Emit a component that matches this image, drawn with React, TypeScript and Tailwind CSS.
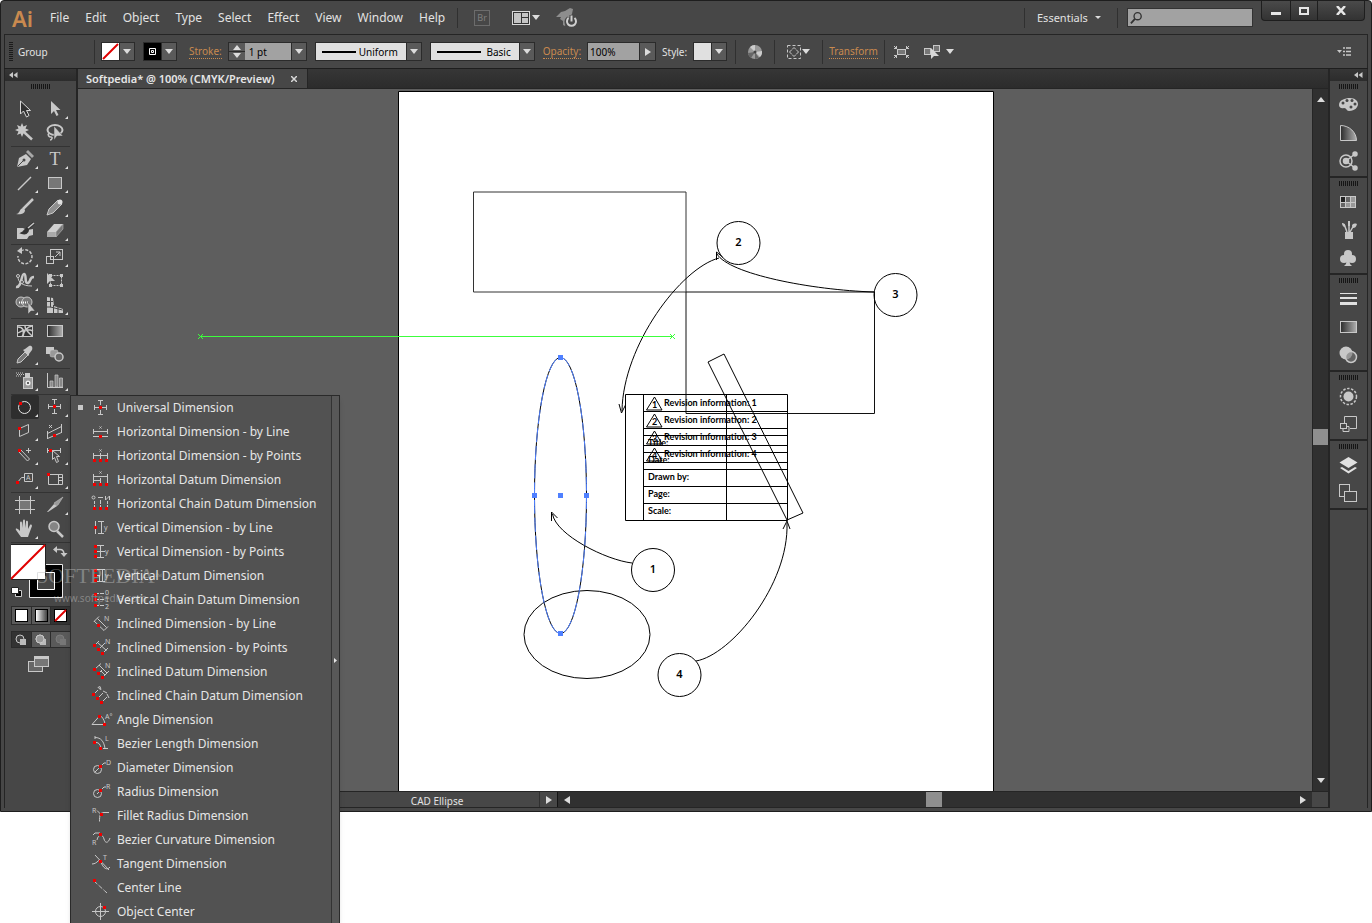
import { useState } from "react";
import type { ReactNode } from "react";

interface Tool {
  name: string;
  art: ReactNode;
  more?: boolean;
}

const L = "#c8c8c8";
const RED = "#f00000";

const MENUS = [
  "File",
  "Edit",
  "Object",
  "Type",
  "Select",
  "Effect",
  "View",
  "Window",
  "Help",
];

function Dot({ x, y }: { x: number; y: number }) {
  return <rect x={x - 1.5} y={y - 1.5} width="3" height="3" fill={RED} />;
}

function Mark({ x, y, children }: { x: number; y: number; children: string }) {
  return (
    <text x={x} y={y} fontSize="7" fill={L} stroke="none">
      {children}
    </text>
  );
}

function Line({ d, dash }: { d: string; dash?: string }) {
  return <path d={d} fill="none" stroke={L} strokeDasharray={dash} />;
}

const UNIVERSAL = (
  <>
    <Line d="M8 4.5h5M10.5 4v5M10.5 14v5M8 18.5h5M4.5 9v5M16.5 9v5M4 11.5h13" />
    <Dot x={10.5} y={11.5} />
  </>
);

// tool panel groups, two tools to a row
const TOOL_GROUPS: Tool[][] = [
  [
    {
      name: "Selection Tool",
      art: <path d="M9.5 4v13l3-3 3 6 2.5-1.5-2.5-5h4z" fill="#303030" stroke="#d8d8d8" />,
    },
    {
      name: "Direct Selection Tool",
      more: true,
      art: <path d="M10 4v13l3-3 2.5 5 2-1-2.5-5h4.5z" fill={L} />,
    },
    {
      name: "Magic Wand Tool",
      art: (
        <g>
          <path d="M14 12l7 6.5" stroke={L} strokeWidth="2.5" />
          <path
            d="M11 2l1.5 3.5L16 4l-1.5 3.5L18 9l-3.5 1.5L16 14l-3.5-1.5L11 16l-1.5-3.5L6 14l1.5-3.5L4 9l3.5-1.5L6 4l3.5 1.5z"
            fill={L}
          />
        </g>
      ),
    },
    {
      name: "Lasso Tool",
      art: (
        <g>
          <ellipse cx="14" cy="9" rx="7.5" ry="5" fill="none" stroke={L} strokeWidth="2" />
          <path d="M8 12c-2 2 0 4 2 4s1 3-1 3" fill="none" stroke={L} strokeWidth="1.5" />
          <path d="M13 5v14l3-4h6z" fill={L} stroke="#474747" strokeWidth=".5" />
        </g>
      ),
    },
  ],
  [
    {
      name: "Pen Tool",
      more: true,
      art: (
        <g>
          <path d="M6 20l2-9 7-4 5 5-4 6z" fill={L} />
          <path d="M15 5l2-2 6 6-2 2z" fill="#a8a8a8" />
          <path d="M6.5 19.5l6-6" stroke="#474747" />
          <circle cx="13" cy="13" r="1.5" fill="#474747" />
        </g>
      ),
    },
    {
      name: "Type Tool",
      more: true,
      art: (
        <text x="14" y="18" fontSize="18" textAnchor="middle" fill={L} className="font-['Liberation_Serif',serif]">
          T
        </text>
      ),
    },
    {
      name: "Line Segment Tool",
      more: true,
      art: <path d="M7 19L20 6" stroke={L} strokeWidth="1.5" />,
    },
    {
      name: "Rectangle Tool",
      more: true,
      art: <rect x="7.5" y="6.5" width="13" height="11" fill="#777" stroke={L} />,
    },
    {
      name: "Paintbrush Tool",
      art: (
        <g>
          <path d="M12 14L22 4" stroke={L} strokeWidth="2.5" />
          <path d="M5 19c4 0 3-5 7-6l2 2c0 4-5 5-9 4z" fill={L} />
        </g>
      ),
    },
    {
      name: "Pencil Tool",
      more: true,
      art: (
        <g>
          <path d="M6 20l2-6 9-9 4 4-9 9z" fill="#8f8f8f" stroke={L} />
          <circle cx="19" cy="7" r="2.5" fill="#e0e0e0" />
        </g>
      ),
    },
    {
      name: "Blob Brush Tool",
      art: (
        <g>
          <path d="M6 9h6l4 2 6-1v6l-4 1-2 3H6z" fill={L} />
          <path d="M11 14c2-1 2-3 5-4l1 1c0 3-3 4-6 3z" fill="#333" stroke="#333" strokeWidth="2" />
          <path d="M16 10l7-6" stroke="#333" strokeWidth="3" />
          <path d="M17 9l6-5" stroke={L} strokeWidth="1.5" />
        </g>
      ),
    },
    {
      name: "Eraser Tool",
      more: true,
      art: (
        <g>
          <path d="M6 13l7-8h9l-7 8z" fill="#d0d0d0" />
          <path d="M6 13h9v5H6z" fill="#aaa" />
          <path d="M15 13l7-8v5l-7 8z" fill="#777" stroke={L} strokeWidth=".5" />
        </g>
      ),
    },
  ],
  [
    {
      name: "Rotate Tool",
      more: true,
      art: (
        <g>
          <path d="M10 6a7 7 0 1 1-3 5" fill="none" stroke={L} strokeWidth="1.5" strokeDasharray="3 1.5" />
          <path d="M11 2v7L6 6z" fill={L} />
        </g>
      ),
    },
    {
      name: "Scale Tool",
      more: true,
      art: (
        <g fill="none" stroke={L}>
          <rect x="9.500" y="4.500" width="12" height="10" />
          <rect x="5.500" y="11.500" width="7" height="7" />
          <path d="M14 12l5-5M15 7h4v4" />
        </g>
      ),
    },
    {
      name: "Width Tool",
      more: true,
      art: (
        <g fill="none" stroke={L}>
          <path d="M5 18c6 1 5-13 8-13s0 10 4 9c3-1 1-6 6-6" strokeWidth="2.5" />
          <path d="M7 8c0 5 4 9 14 9" />
          <circle cx="11" cy="13" r="1.5" fill="#474747" />
          <circle cx="7" cy="7" r="1.5" fill="#474747" />
        </g>
      ),
    },
    {
      name: "Free Transform Tool",
      art: (
        <g>
          <rect x="9.5" y="6.5" width="11" height="10" fill="none" stroke={L} strokeDasharray="2 1" />
          <path d="M8 5h3v3H8zM19 5h3v3h-3zM19 15h3v3h-3zM8 15h3v3H8z" fill={L} />
          <path d="M6 4v11l3-3h5z" fill={L} />
        </g>
      ),
    },
    {
      name: "Shape Builder Tool",
      more: true,
      art: (
        <g fill="none" stroke={L}>
          <circle cx="10" cy="9" r="5" fill="#777" />
          <circle cx="16" cy="9" r="5" fill="#777" />
          <path d="M8 9.5h10" stroke="#fff" strokeDasharray="1 1" strokeWidth="2" />
          <path d="M17 9v12l3-3h4z" fill={L} stroke="#474747" strokeWidth=".5" />
        </g>
      ),
    },
    {
      name: "Perspective Grid Tool",
      more: true,
      art: (
        <g>
          <path d="M6 4l6 1 1 8 9 3v4H6z" fill={L} />
          <path d="M9.5 4v10l12 3M6 8.5h6M6 14h4M12.5 12v8M17 14v6" fill="none" stroke="#474747" />
        </g>
      ),
    },
  ],
  [
    {
      name: "Mesh Tool",
      art: (
        <g fill="none" stroke={L}>
          <rect x="6.5" y="6.5" width="15" height="11" fill="#333" />
          <path
            d="M7 8c5 0 7 4 4 10M7 14c6-4 11-4 15-2M14 7c0 4 3 6 7 10M21 7c-5 1-8 5-9 10"
            strokeWidth="1.5"
          />
        </g>
      ),
    },
    {
      name: "Gradient Tool",
      art: <rect x="6.5" y="6.5" width="15" height="11" fill="url(#tool-gradient)" stroke={L} />,
    },
    {
      name: "Eyedropper Tool",
      more: true,
      art: (
        <g>
          <path d="M6 20l1-4 7-7 3 3-7 7z" fill="#777" stroke={L} />
          <path d="M12 7l2-1 4-3c3-1 4 2 3 4l-3 4v2z" fill={L} />
        </g>
      ),
    },
    {
      name: "Blend Tool",
      art: (
        <g>
          <rect x="5" y="4" width="8" height="7" fill={L} />
          <rect x="9" y="7" width="8" height="7" rx="2" fill="#999" stroke="#ccc" strokeWidth=".5" />
          <circle cx="18" cy="14" r="4" fill="#666" stroke={L} strokeWidth="1.5" />
        </g>
      ),
    },
  ],
  [
    {
      name: "Symbol Sprayer Tool",
      more: true,
      art: (
        <g>
          <path d="M5 4h8M5 7h6M6 5.5h8" stroke={L} strokeDasharray="1 1" />
          <rect x="12.5" y="8.5" width="9" height="11" fill="#999" stroke={L} />
          <rect x="14" y="4" width="5" height="4" fill={L} />
          <circle cx="17" cy="14" r="2.5" fill="#eee" />
          <circle cx="17" cy="14" r="1" fill="#333" />
        </g>
      ),
    },
    {
      name: "Column Graph Tool",
      more: true,
      art: (
        <g>
          <path d="M6.5 4v14.5H22" fill="none" stroke={L} />
          <path d="M9 12h3v6H9zM14 6h3v12h-3zM18.5 9h3v9h-3z" fill="#888" stroke={L} strokeWidth=".7" />
        </g>
      ),
    },
  ],
  [
    {
      name: "CAD Ellipse Tool",
      more: true,
      art: (
        <g>
          <circle cx="13.5" cy="12.5" r="6" fill="none" stroke="#e6e6e6" />
          <Dot x={9.5} y={8.5} />
        </g>
      ),
    },
    {
      name: "Universal Dimension Tool",
      more: true,
      art: <g transform="translate(3 0)">{UNIVERSAL}</g>,
    },
    {
      name: "CAD Quadrilateral Tool",
      more: true,
      art: (
        <g>
          <Line d="M8.5 9.5l9-4v8l-9 4z" />
          <Dot x={8.5} y={9.5} />
        </g>
      ),
    },
    {
      name: "Object Measure Tool",
      more: true,
      art: (
        <g>
          <Line d="M6.5 14.5l14-7M6.5 19.5l14-6M6.5 12v8M20.5 5v9M8 6l3 3M11 6l-3 3" />
          <Dot x={13.5} y={16.5} />
        </g>
      ),
    },
    {
      name: "CAD Line Tool",
      more: true,
      art: (
        <g>
          <Line d="M7.5 8.5l9 9.5M9.5 6.5l9 9.5M16.500 18l2-2M17.5 5v5M15 7.5h5" />
          <Dot x={8.5} y={7.5} />
        </g>
      ),
    },
    {
      name: "Scale Dimension Tool",
      more: true,
      art: (
        <g>
          <Line d="M6.5 5v5M19.5 5v5M6 7.5h14" />
          <Dot x={9.5} y={7.5} />
          <path d="M11.5 7.5v9l2-2 2 5 2-1-2-5h3z" fill="#474747" stroke={L} />
        </g>
      ),
    },
    {
      name: "Label Tool",
      more: true,
      art: (
        <g>
          <Line d="M13.5 6.5h8v8h-8zM6.500 15.5l4-5h3" />
          <Dot x={6.5} y={15.5} />
          <Mark x={15} y={13}>A</Mark>
        </g>
      ),
    },
    {
      name: "Title Block Tool",
      more: true,
      art: (
        <g>
          <Line d="M7.5 7.5h14v10h-14zM17.5 7v10M18 10.5h3M18 13.5h3" />
          <Dot x={7.5} y={7.5} />
        </g>
      ),
    },
  ],
  [
    {
      name: "Artboard Tool",
      art: (
        <g>
          <rect x="8.5" y="7.5" width="11" height="9" fill="#777" />
          <path d="M8.5 3v18M19.5 3v18M4 7.5h20M4 16.5h20" stroke={L} />
        </g>
      ),
    },
    {
      name: "Slice Tool",
      more: true,
      art: (
        <g>
          <path d="M6 19l7-8 3 2-9 6z" fill={L} />
          <path d="M13 10l9-6-5 8-2 1z" fill="#9a9a9a" stroke={L} strokeWidth=".5" />
        </g>
      ),
    },
    {
      name: "Hand Tool",
      more: true,
      art: (
        <path
          d="M10 20l-5-7c-1-2 1-2 3 0l1 1V6c0-2 2-2 2 0v5l1-7c0-2 2-2 2 0v7l1-6c0-2 2-1 2 0v7l2-4c1-1 2 0 2 1l-3 8-1 3z"
          fill={L}
        />
      ),
    },
    {
      name: "Zoom Tool",
      art: (
        <g>
          <path d="M16 14l6 6" stroke={L} strokeWidth="2.5" />
          <circle cx="13" cy="9.5" r="5" fill="#858585" stroke={L} strokeWidth="1.5" />
        </g>
      ),
    },
  ],
];

const DIMENSIONS: Tool[] = [
  { name: "Universal Dimension", art: UNIVERSAL },
  {
    name: "Horizontal Dimension - by Line",
    art: (
      <>
        <Line d="M3.5 9v5M17.5 9v5M3 11.5h15M3 16.5h15M9.5 6.5l2 2M11.5 6.5l-2 2" />
        <Dot x={10.5} y={16.5} />
      </>
    ),
  },
  {
    name: "Horizontal Dimension - by Points",
    art: (
      <>
        <Line d="M3.5 9v6M10.5 9v6M17.5 9v6M3 11.5h15M9.5 5.5l2 2M11.5 5.5l-2 2" />
        <Dot x={4.5} y={16.5} />
        <Dot x={10.5} y={16.5} />
        <Dot x={16.5} y={16.5} />
      </>
    ),
  },
  {
    name: "Horizontal Datum Dimension",
    art: (
      <>
        <Line d="M3.5 6v9M10.5 10v5M17.5 6v9M3 8.5h15M3 12.5h8M9.5 3.5l2 2M11.5 3.5l-2 2" />
        <Dot x={4.5} y={16.5} />
        <Dot x={10.5} y={16.5} />
        <Dot x={16.5} y={16.5} />
      </>
    ),
  },
  {
    name: "Horizontal Chain Datum Dimension",
    art: (
      <>
        <Line d="M4.5 9v3M4.5 13v2M10.5 8v4M10.5 13v2M17.5 9v3M17.5 13v2M8 5.5h5M15.5 4v4l4-4v4" />
        <circle cx="3.5" cy="5.5" r="1.5" fill="none" stroke={L} />
        <Dot x={4.5} y={16.5} />
        <Dot x={10.5} y={16.5} />
        <Dot x={16.5} y={16.5} />
      </>
    ),
  },
  {
    name: "Vertical Dimension - by Line",
    art: (
      <>
        <Line d="M5.5 5v13M8 5.5h6M8 17.5h6M11.5 5v13" />
        <Dot x={5.5} y={11.5} />
        <Mark x={14} y={14}>y</Mark>
      </>
    ),
  },
  {
    name: "Vertical Dimension - by Points",
    art: (
      <>
        <Line d="M7 5.5h7M7 11.5h8M7 17.5h7M10.5 5v13" />
        <Dot x={5.5} y={6.5} />
        <Dot x={5.5} y={11.5} />
        <Dot x={5.5} y={16.5} />
        <Mark x={15} y={14}>y</Mark>
      </>
    ),
  },
  {
    name: "Vertical Datum Dimension",
    art: (
      <>
        <Line d="M7 5.5h8M7 11.5h3M7 17.5h8M9.5 11v7M12.5 5v13" />
        <Dot x={5.5} y={6.5} />
        <Dot x={5.5} y={11.5} />
        <Dot x={5.5} y={16.5} />
        <Mark x={15} y={14}>y</Mark>
      </>
    ),
  },
  {
    name: "Vertical Chain Datum Dimension",
    art: (
      <>
        <Line d="M7 5.5h2M10 5.5h4M7 11.5h2M10 11.5h4M7 17.5h2M10 17.5h4" />
        <Dot x={5.5} y={6.5} />
        <Dot x={5.5} y={11.5} />
        <Dot x={5.5} y={17.5} />
        <Mark x={15} y={7}>0</Mark>
        <Mark x={15} y={14}>1</Mark>
        <Mark x={15} y={21}>2</Mark>
      </>
    ),
  },
  {
    name: "Inclined Dimension - by Line",
    art: (
      <>
        <Line d="M4 9.5l5-5M14 18.5l4-4M7.5 6.5l9 9M4 9l10 9.5" />
        <Dot x={8.5} y={13.5} />
        <Mark x={14} y={9}>N</Mark>
      </>
    ),
  },
  {
    name: "Inclined Dimension - by Points",
    art: (
      <>
        <Line d="M5 9l4-4M9 13l6-6M13 17l5-5M7.5 6.5l9 8" />
        <Dot x={4.5} y={9.5} />
        <Dot x={8.5} y={13.5} />
        <Dot x={12.5} y={17.5} />
        <Mark x={15} y={8}>N</Mark>
      </>
    ),
  },
  {
    name: "Inclined Datum Dimension",
    art: (
      <>
        <Line d="M5 9l6-5.500M9 13l3-3M13 17l6-6M9 5l8 8M11 11l4 4" />
        <Dot x={4.5} y={9.5} />
        <Dot x={8.5} y={13.5} />
        <Dot x={12.5} y={17.5} />
        <Mark x={15} y={8}>N</Mark>
      </>
    ),
  },
  {
    name: "Inclined Chain Datum Dimension",
    art: (
      <>
        <Line d="M4 10l4-4M8 14l5-5M12 18l5-5M8 3.5l2-1 1 3-2-1zM13 7l4 2M17 10l2 4" />
        <Dot x={3.5} y={10.5} />
        <Dot x={7.5} y={14.5} />
        <Dot x={11.5} y={18.5} />
      </>
    ),
  },
  {
    name: "Angle Dimension",
    art: (
      <>
        <Line d="M15 16.5H2l8-9c2 1 4 4 5 8" />
        <Dot x={9.5} y={8.5} />
        <Dot x={14.5} y={16.5} />
        <Mark x={15} y={11}>A°</Mark>
      </>
    ),
  },
  {
    name: "Bezier Length Dimension",
    art: (
      <>
        <Line d="M5 5.5c6 0 9 4 10 11M5 4v3M13 16.5h5M6 10.5c3 0 4 2 5 5" />
        <Dot x={4.5} y={10.5} />
        <Dot x={10.5} y={16.5} />
        <Mark x={15} y={9}>L</Mark>
      </>
    ),
  },
  {
    name: "Diameter Dimension",
    art: (
      <>
        <circle cx="7.5" cy="13.5" r="4" fill="none" stroke={L} />
        <Line d="M5 16l9-9h2" />
        <Dot x={10.5} y={10.5} />
        <Mark x={16} y={9}>D</Mark>
      </>
    ),
  },
  {
    name: "Radius Dimension",
    art: (
      <>
        <circle cx="7.5" cy="13.5" r="4" fill="none" stroke={L} />
        <Line d="M7 14l7-7h2" />
        <Dot x={10.5} y={10.5} />
        <Mark x={16} y={9}>R</Mark>
      </>
    ),
  },
  {
    name: "Fillet Radius Dimension",
    art: (
      <>
        <Line d="M19 8.5h-5c-4 0-4.500 3-4.500 9M7 6.5l4 4" />
        <Dot x={11.5} y={10.5} />
        <Mark x={2} y={9}>R</Mark>
      </>
    ),
  },
  {
    name: "Bezier Curvature Dimension",
    art: (
      <>
        <Line d="M3 7l2-2h5M7 12c1-6 6-6 7-1 1 4 4 5 6-1" />
        <Dot x={10.5} y={6.5} />
        <Mark x={2} y={17}>R</Mark>
      </>
    ),
  },
  {
    name: "Tangent Dimension",
    art: (
      <>
        <Line d="M2 12c6 0 7-7 9-2 2 6 6 9 9 5M5 3l14 15" />
        <Dot x={10.5} y={9.5} />
        <Mark x={13} y={8}>T</Mark>
      </>
    ),
  },
  {
    name: "Center Line",
    art: (
      <>
        <Line d="M4 5l13 12" dash="4 1 1 1" />
        <Dot x={4.5} y={4.5} />
      </>
    ),
  },
  {
    name: "Object Center",
    art: (
      <>
        <circle cx="10.5" cy="11.5" r="5" fill="none" stroke={L} />
        <Line d="M10.5 3v17M2 11.5h17" />
        <Dot x={14.5} y={7.5} />
      </>
    ),
  },
];

const DOCK_GROUPS: Tool[][] = [
  [
    {
      name: "Color",
      art: (
        <g>
          <path d="M1 10c0-5 6-7 11-7 5 0 8 3 8 6s-3 7-9 7c-3 0-2-3-5-3-3 1-5-1-5-3z" fill={L} />
          <circle cx="5" cy="8" r="1.5" fill="#474747" />
          <circle cx="9" cy="5.5" r="1.5" fill="#474747" />
          <circle cx="14" cy="5.5" r="1.5" fill="#474747" />
          <circle cx="17" cy="9" r="1.5" fill="#474747" />
          <circle cx="13" cy="12" r="1.5" fill="#474747" />
        </g>
      ),
    },
    {
      name: "Color Guide",
      art: <path d="M2.5 2.5v15h16c0-8-7-15-16-15z" fill="url(#tool-gradient)" stroke={L} />,
    },
    {
      name: "Kuler",
      art: (
        <g fill="none" stroke={L} strokeWidth="1.5">
          <circle cx="8" cy="10" r="6" />
          <circle cx="8" cy="10" r="2.5" fill={L} />
          <path d="M8 10l9-7M8 10l9 7" />
          <circle cx="17" cy="3" r="2" fill={L} />
          <circle cx="17" cy="17" r="2" fill={L} />
        </g>
      ),
    },
  ],
  [
    {
      name: "Swatches",
      art: (
        <g>
          <rect x="2" y="4" width="16" height="12" fill={L} />
          <path d="M3 5h4v5H3z" fill="#222" />
          <path d="M8 5h4v5H8zM3 11h4v4H3z" fill="#666" />
          <path d="M13 5h4v5h-4zM8 11h4v4H8zM13 11h4v4h-4z" fill="#999" />
        </g>
      ),
    },
    {
      name: "Brushes",
      art: (
        <g>
          <path d="M7 12h8v7H7z" fill={L} />
          <path d="M9 12L6 4M11 12V3M12 12l4-7" stroke={L} strokeWidth="1.5" />
          <path d="M4 3c2 0 4 2 3 4-2 0-3-2-3-4zM10 1h2v5h-2zM14 6c0-2 2-3 5-2-1 3-2 4-4 4z" fill={L} />
        </g>
      ),
    },
    {
      name: "Symbols",
      art: (
        <g fill={L}>
          <circle cx="10" cy="6" r="4" />
          <circle cx="6" cy="11" r="4" />
          <circle cx="14" cy="11" r="4" />
          <path d="M9 9h2l1 7 2 2H6l2-2z" />
        </g>
      ),
    },
  ],
  [
    {
      name: "Stroke",
      art: (
        <g stroke="#e0e0e0">
          <path d="M2 4.5h17" />
          <path d="M2 9h17" strokeWidth="2" />
          <path d="M2 14.5h17" strokeWidth="3" />
        </g>
      ),
    },
    {
      name: "Gradient",
      art: <rect x="2.5" y="4.5" width="16" height="11" fill="url(#tool-gradient)" stroke={L} />,
    },
    {
      name: "Transparency",
      art: (
        <g>
          <circle cx="8" cy="8" r="6.5" fill={L} />
          <circle cx="13" cy="12" r="5.5" fill="#777" fillOpacity=".6" stroke={L} strokeWidth="1.5" />
        </g>
      ),
    },
  ],
  [
    {
      name: "Appearance",
      art: (
        <g>
          <circle cx="10.5" cy="10.5" r="5" fill={L} />
          <circle
            cx="10.5"
            cy="10.5"
            r="8"
            fill="none"
            stroke={L}
            strokeWidth="1.5"
            strokeDasharray="2.5 1.5"
          />
        </g>
      ),
    },
    {
      name: "Graphic Styles",
      art: (
        <g fill="none" stroke={L}>
          <path d="M6.5 9V2.5h12v12H12" />
          <rect x="2.5" y="9.5" width="6" height="5" />
          <path d="M9 12.5h2v5H5v-3" />
        </g>
      ),
    },
  ],
  [
    {
      name: "Layers",
      art: (
        <g fill="#e0e0e0">
          <path d="M10.5 2l9 5.5-9 5.500-9-5.500z" />
          <path d="M4 12l6.500 4 6.500-4 2 1-8.500 5.500L2 13z" />
        </g>
      ),
    },
    {
      name: "Artboards",
      art: (
        <g fill="#474747" stroke={L}>
          <rect x="1.5" y="1.5" width="10" height="12" />
          <rect x="6.5" y="8.5" width="12" height="10" />
        </g>
      ),
    },
  ],
];

function Arrow({ className = "" }: { className?: string }) {
  return (
    <svg width="8" height="6" viewBox="0 0 8 6" className={className} aria-hidden="true">
      <path d="M0 0h8L4 5z" fill="#dcdcdc" />
    </svg>
  );
}

function SideArrow({ left = false }: { left?: boolean }) {
  return (
    <svg width="6" height="8" viewBox="0 0 6 8" aria-hidden="true">
      <path d={left ? "M6 0v8L0 4z" : "M0 0v8l6-4z"} fill="#dcdcdc" />
    </svg>
  );
}

function DropButton({ label }: { label: string }) {
  return (
    <button
      aria-label={label}
      className="flex h-full w-[15px] shrink-0 items-center justify-center border-l border-[#2b2b2b] bg-[#5a5a5a]"
    >
      <Arrow />
    </button>
  );
}

function Divider() {
  return <span className="h-6 w-px shrink-0 bg-[#303030]" />;
}

function Grip() {
  return (
    <div className="flex h-[10px] items-center justify-center">
      <svg width="19" height="5" viewBox="0 0 19 5" aria-hidden="true">
        <path d="M0 2.5h19" stroke="#151515" strokeWidth="5" strokeDasharray="1 1" />
      </svg>
    </div>
  );
}

function Collapse() {
  return (
    <svg width="9" height="6" viewBox="0 0 9 6" aria-hidden="true">
      <path d="M4 0v6L0 3zM8.5 0v6l-4-3z" fill="#c8c8c8" />
    </svg>
  );
}

function StrokeSelect({
  label,
  value,
  line,
  className,
}: {
  label: string;
  value: string;
  line: number;
  className: string;
}) {
  return (
    <div className="ml-2 flex h-[19px] items-center border border-[#2b2b2b] bg-[#e0e0e0]">
      <svg width={line} height="2" className="ml-[6px] shrink-0" aria-hidden="true">
        <path d={`M0 1h${line}`} stroke="#000" strokeWidth="2" />
      </svg>
      <select
        aria-label={label}
        defaultValue={value}
        className={`appearance-none pr-2 text-right text-[10px] leading-4 text-black outline-none ${className}`}
      >
        <option>{value}</option>
      </select>
      <DropButton label={`${label} list`} />
    </div>
  );
}

function TitleBar() {
  return (
    <header className="flex h-[33px] items-center">
      <span className="w-8 pl-2 text-[22px] leading-6 font-semibold text-[#c98a4f]">Ai</span>
      <nav className="ml-[6px] flex">
        {MENUS.map((menu) => (
          <button key={menu} className="px-2 text-[12px] leading-5 text-[#e2e2e2]">
            {menu}
          </button>
        ))}
      </nav>
      <span className="mr-4 ml-1 h-5 w-px bg-[#303030]" />
      <button className="h-4 w-4 border border-[#6c6c6c] text-[9px] leading-3 text-[#808080]">Br</button>
      <button aria-label="Arrange documents" className="ml-[22px] flex items-center gap-[2px]">
        <svg width="18" height="16" viewBox="0 0 18 16" aria-hidden="true">
          <rect x=".5" y="1.5" width="17" height="13" fill="#333" stroke="#d8d8d8" />
          <path d="M2 3h7v10H2zM10 3h6v4h-6zM10 8h6v5h-6z" fill="#c4c4c4" />
        </svg>
        <Arrow />
      </button>
      <button aria-label="GPU performance" className="ml-4">
        <svg width="22" height="20" viewBox="0 0 22 20" aria-hidden="true">
          <path d="M0 9l5-5 4-1 5-3 3 1-1 5-3 4-4 8-2-1v-4l-3-2 1-2z" fill="#8d8d8d" />
          <path d="M12.500 10a5 5 0 1 0 6 0M15.500 7v7" fill="none" stroke="#474747" strokeWidth="4" />
          <path d="M12.500 10a4.500 4.500 0 1 0 6 0M15.500 7.500v6" fill="none" stroke="#d0d0d0" strokeWidth="2" />
        </svg>
      </button>
      <div className="ml-auto flex h-full items-center">
        <span className="h-5 w-px bg-[#303030]" />
        <div className="relative ml-2 flex items-center">
          <select
            aria-label="Workspace"
            defaultValue="Essentials"
            className="w-[76px] appearance-none px-1 text-[11px] leading-5 text-[#e2e2e2] outline-none"
          >
            <option>Essentials</option>
          </select>
          <svg
            width="6"
            height="4"
            viewBox="0 0 6 4"
            className="pointer-events-none absolute right-2"
            aria-hidden="true"
          >
            <path d="M0 0h6L3 3z" fill="#dcdcdc" />
          </svg>
        </div>
        <span className="mr-[9px] ml-2 h-5 w-px bg-[#303030]" />
        <label className="flex h-[19px] w-[126px] items-center border border-[#333] bg-[#a2a2a2] pl-[2px]">
          <svg width="14" height="14" viewBox="0 0 14 14" aria-hidden="true">
            <circle cx="8.5" cy="5" r="4" fill="none" stroke="#333" strokeWidth="1.5" />
            <path d="M5.5 8L1 13" stroke="#333" strokeWidth="2" />
          </svg>
          <input
            type="search"
            aria-label="Search"
            className="w-full bg-transparent text-[12px] leading-4 outline-none"
          />
        </label>
        <div className="mr-[3px] ml-2 flex h-5 self-start overflow-hidden rounded-b border border-t-0 border-[#1e1e1e] bg-linear-to-b from-[#4a4a4a] to-[#333]">
          <button aria-label="Minimize" className="flex w-7 items-end justify-center pb-[5px]">
            <span className="h-[3px] w-[10px] bg-[#e6e6e6]" />
          </button>
          <button aria-label="Maximize" className="flex w-7 items-center justify-center border-x border-[#1e1e1e]">
            <span className="h-2 w-[10px] border-2 border-[#e6e6e6]" />
          </button>
          <button aria-label="Close" className="flex w-[46px] items-center justify-center">
            <svg width="10" height="9" viewBox="0 0 10 9" aria-hidden="true">
              <path d="M1 0l8 9M9 0L1 9" stroke="#e6e6e6" strokeWidth="2.5" />
            </svg>
          </button>
        </div>
      </div>
    </header>
  );
}

function ControlBar() {
  return (
    <div className="flex h-[34px] items-center border border-b-0 border-[#252525] pl-1 text-[10px] leading-4 text-[#e2e2e2]">
      <svg width="4" height="19" viewBox="0 0 4 19" aria-hidden="true">
        <path d="M2 0v19" stroke="#1c1c1c" strokeWidth="4" strokeDasharray="1 1" />
      </svg>
      <span className="ml-[5px] w-[76px]">Group</span>
      <Divider />
      <div className="ml-[6px] flex h-[19px] border border-[#2b2b2b]">
        <button aria-label="Fill" className="w-[17px] bg-white">
          <svg width="17" height="17" viewBox="0 0 17 17" aria-hidden="true">
            <path d="M1 16L16 1" stroke="#e00000" strokeWidth="2" />
          </svg>
        </button>
        <DropButton label="Fill swatches" />
      </div>
      <div className="ml-2 flex h-[19px] border border-[#2b2b2b]">
        <button aria-label="Stroke color" className="w-[17px] bg-black">
          <svg width="17" height="17" viewBox="0 0 17 17" aria-hidden="true">
            <path d="M5.500 5.500h6v6h-6z" fill="none" stroke="#fff" />
            <path d="M7.500 7.500h2v2h-2z" fill="none" stroke="#fff" />
          </svg>
        </button>
        <DropButton label="Stroke swatches" />
      </div>
      <label
        htmlFor="stroke-weight"
        className="ml-3 border-b border-dotted border-[#c98a4f] leading-[14px] text-[#c98a4f]"
      >
        Stroke:
      </label>
      <div className="ml-[6px] flex h-[19px] border border-[#2b2b2b]">
        <div className="flex w-4 flex-col bg-[#5a5a5a]">
          <button
            aria-label="Increase stroke"
            className="flex flex-1 items-center justify-center border-b border-[#2b2b2b]"
          >
            <Arrow className="rotate-180" />
          </button>
          <button aria-label="Decrease stroke" className="flex flex-1 items-center justify-center">
            <Arrow />
          </button>
        </div>
        <input
          id="stroke-weight"
          defaultValue="1 pt"
          className="w-[46px] bg-[#a2a2a2] px-1 text-black outline-none"
        />
        <DropButton label="Stroke weights" />
      </div>
      <StrokeSelect label="Variable width profile" value="Uniform" line={34} className="w-[50px]" />
      <StrokeSelect label="Brush definition" value="Basic" line={44} className="w-[38px]" />
      <label
        htmlFor="opacity"
        className="ml-2 border-b border-dotted border-[#c98a4f] leading-[14px] text-[#c98a4f]"
      >
        Opacity:
      </label>
      <div className="ml-[6px] flex h-[19px] border border-[#2b2b2b]">
        <input
          id="opacity"
          defaultValue="100%"
          className="w-[51px] bg-[#a2a2a2] px-[2px] text-black outline-none"
        />
        <button
          aria-label="Opacity slider"
          className="flex w-4 items-center justify-center border-l border-[#2b2b2b] bg-[#5a5a5a]"
        >
          <SideArrow />
        </button>
      </div>
      <span className="ml-[6px]">Style:</span>
      <div className="ml-[6px] flex h-[19px] border border-[#2b2b2b]">
        <span className="w-[17px] bg-[#e0e0e0]" />
        <DropButton label="Graphic styles" />
      </div>
      <div className="ml-2 flex items-center gap-3">
        <Divider />
        <button aria-label="Recolor artwork">
          <svg width="14" height="14" viewBox="0 0 14 14" aria-hidden="true">
            <circle cx="7" cy="7" r="7" fill="#999" />
            <path d="M7 7L2 2a7 7 0 0 1 5-2zM7 7l7-1a7 7 0 0 1-2 6z" fill="#ccc" />
            <path d="M7 7L0 8a7 7 0 0 0 3 5zM7 7v7l4-1z" fill="#666" />
            <circle cx="7" cy="7" r="1.5" fill="#444" />
          </svg>
        </button>
        <Divider />
        <button aria-label="Align to" className="flex items-center">
          <svg width="15" height="14" viewBox="0 0 15 14" aria-hidden="true">
            <rect x=".5" y=".5" width="13" height="13" fill="none" stroke={L} strokeDasharray="3 2" />
            <path
              d="M4.500 5l-2 2 2 2M9.500 5l2 2-2 2M5 4.500l2-2 2 2M5 9.500l2 2 2-2"
              fill="none"
              stroke={L}
            />
          </svg>
          <Arrow />
        </button>
        <Divider />
        <button className="-mx-[6px] border-b border-dotted border-[#c98a4f] leading-[14px] text-[#c98a4f]">
          Transform
        </button>
        <Divider />
      </div>
      <button aria-label="Isolate selected object" className="ml-2">
        <svg width="17" height="14" viewBox="0 0 17 14" aria-hidden="true">
          <rect x="4.5" y="4.5" width="8" height="5" fill="#777" stroke={L} />
          <path
            d="M1 1l3 3M16 1l-3 3M1 13l3-3M16 13l-3-3M3.500 1v2.500H1M13.500 1v2.500H16M3.500 13v-2.500H1M13.500 13v-2.500H16"
            stroke={L}
            fill="none"
          />
        </svg>
      </button>
      <button aria-label="Select similar objects" className="ml-[14px] flex items-center gap-[6px]">
        <svg width="16" height="14" viewBox="0 0 16 14" aria-hidden="true">
          <rect x=".5" y="3.5" width="6" height="6" fill="#777" stroke={L} />
          <rect x="9.5" y=".5" width="6" height="6" fill="#777" stroke={L} />
          <path d="M7 3v11l3-3h5z" fill="#d8d8d8" />
        </svg>
        <Arrow />
      </button>
      <button aria-label="Panel menu" className="mr-4 ml-auto">
        <svg width="14" height="9" viewBox="0 0 14 9" aria-hidden="true">
          <path d="M0 3h5L2.500 6z" fill={L} />
          <path d="M6 1h2M6 4.500h2M6 8h2M9 1h5M9 4.500h5M9 8h5" stroke={L} strokeWidth="1.5" />
        </svg>
      </button>
    </div>
  );
}

function DimensionMenu() {
  const [picked, setPicked] = useState("Universal Dimension");

  return (
    <div className="absolute top-0 left-[59px] z-20 flex w-[270px] border border-[#2a2a2a] bg-[#525252] shadow-md">
      <ul className="flex-1">
        {DIMENSIONS.map((item) => (
          <li key={item.name}>
            <button
              className="flex h-6 w-full items-center pb-px text-left"
              onClick={() => setPicked(item.name)}
            >
              <span className="flex w-[18px] justify-end pr-[6px]">
                {picked === item.name && <span className="h-[5px] w-[5px] bg-[#c8c8c8]" />}
              </span>
              <svg width="24" height="24" viewBox="0 0 24 24" className="ml-px shrink-0" aria-hidden="true">
                {item.art}
              </svg>
              <span className="ml-[3px] text-[12px] leading-5 whitespace-nowrap text-[#e6e6e6]">
                {item.name}
              </span>
            </button>
          </li>
        ))}
      </ul>
      <button
        aria-label="Tear off"
        className="flex w-2 items-center justify-center border-l border-[#333] bg-[#585858]"
      >
        <svg width="3" height="5" viewBox="0 0 3 5" aria-hidden="true">
          <path d="M0 0v5l3-2.500z" fill="#e6e6e6" />
        </svg>
      </button>
    </div>
  );
}

function FillStroke() {
  return (
    <div className="relative">
      <svg width="60" height="58" viewBox="0 0 60 58" className="mt-px" aria-hidden="true">
        <path d="M18.5 20.5h33v33h-33z" fill="#000" stroke="#e8e8e8" />
        <path d="M26.5 28.5h17v17h-17z" fill="#474747" stroke="#fff" />
        <rect x="-.5" y=".5" width="35" height="35" fill="#fff" stroke="#222" />
        <path d="M0 35L34 1" stroke="#e00000" strokeWidth="2" />
        <path d="M26.5 35v-6.500h8" fill="none" stroke="#ddd" />
        <path d="M45 5.500h4c3 0 4 2 4 5" fill="none" stroke={L} strokeWidth="1.5" />
        <path d="M46 2v7l-4-3.500zM49.500 9h7L53 13z" fill={L} />
        <path d="M4.500 46.500h6v6h-6z" fill="#000" stroke="#ccc" />
        <path d="M.5 43.500h7v6h-7z" fill="#fff" stroke="#222" />
      </svg>
      <div className="mt-1 flex h-[19px] w-[60px] border border-[#2b2b2b] bg-[#5a5a5a]">
        <button aria-label="Color" className="flex flex-1 items-center justify-center">
          <span className="h-[13px] w-[13px] border border-black bg-white" />
        </button>
        <button
          aria-label="Gradient"
          className="flex flex-1 items-center justify-center border-x border-[#2b2b2b]"
        >
          <span className="h-[13px] w-[13px] border border-black bg-linear-to-r from-white to-[#444]" />
        </button>
        <button aria-label="None" className="flex flex-1 items-center justify-center bg-[#333]">
          <svg width="13" height="13" viewBox="0 0 13 13" aria-hidden="true">
            <rect x=".5" y=".5" width="12" height="12" fill="#fff" stroke="#000" />
            <path d="M1 12L12 1" stroke="#e00000" strokeWidth="2" />
          </svg>
        </button>
      </div>
      <div className="mt-[6px] flex h-[17px] w-[60px] border border-[#2b2b2b] bg-[#5a5a5a]">
        {["Draw Normal", "Draw Behind", "Draw Inside"].map((mode, i) => (
          <button
            key={mode}
            aria-label={mode}
            className={`flex flex-1 items-center justify-center ${
              i === 0 ? "bg-[#333]" : "border-l border-[#2b2b2b]"
            }`}
          >
            <svg width="12" height="11" viewBox="0 0 12 11" opacity={i === 2 ? 0.3 : 1} aria-hidden="true">
              <circle cx="5" cy="5" r="4" fill={i === 0 ? "#444" : "#999"} stroke={L} />
              <rect x="5" y="5" width="6" height="6" fill="#bbb" />
              {i === 1 && <circle cx="5" cy="5" r="4" fill="#999" stroke={L} />}
            </svg>
          </button>
        ))}
      </div>
      <button aria-label="Change screen mode" className="mt-2 ml-[17px] block">
        <svg width="22" height="17" viewBox="0 0 22 17" aria-hidden="true">
          <rect x=".5" y="5.5" width="14" height="10" fill="#666" stroke={L} />
          <rect x="6.5" y=".5" width="14" height="10" fill="#777" stroke={L} />
          <path d="M7 2h13" stroke={L} strokeWidth="2" />
        </svg>
      </button>
      <div className="pointer-events-none absolute top-5 left-[25px] z-30 whitespace-nowrap text-white/30">
        <p className="font-['Liberation_Serif',serif] text-[22px] leading-6">
          SOFTPEDIA<sup className="text-[8px]">™</sup>
        </p>
        <p className="ml-[18px] text-[10px] leading-5">www.softpedia.com</p>
      </div>
    </div>
  );
}

function ToolPanel() {
  const [active, setActive] = useState("CAD Ellipse Tool");

  return (
    <aside className="w-[74px] shrink-0 border-r-2 border-l border-[#252525]">
      <div className="flex h-3 items-center bg-linear-to-b from-[#363636] to-[#2c2c2c] pl-1">
        <Collapse />
      </div>
      <Grip />
      <div className="mt-[6px] px-[6px]">
        {TOOL_GROUPS.map((group, i) => (
          <div
            key={i}
            className="relative grid grid-cols-[28px_28px] gap-x-[2px] border-b border-[#333] pb-px"
          >
            {group.map((tool) => (
              <button
                key={tool.name}
                aria-label={tool.name}
                onClick={() => setActive(tool.name)}
                className={`h-6 w-7 ${active === tool.name ? "rounded-xs bg-[#2e2e2e]" : ""}`}
              >
                <svg width="28" height="24" viewBox="0 0 28 24" aria-hidden="true">
                  {tool.art}
                  {tool.more && <path d="M24 22h3v-3z" fill="#e0e0e0" />}
                </svg>
              </button>
            ))}
            {i === 5 && <DimensionMenu />}
          </div>
        ))}
        <FillStroke />
      </div>
    </aside>
  );
}

function RevisionTable() {
  const rows = [411.5, 428.5, 435.5, 445.5, 452.5, 462.5, 469.5, 486.5, 503.5];

  return (
    <g>
      <path d="M624.5 394.5h162v126h-162zM642.5 394v126M725.5 394v126" />
      {rows.map((y) => (
        <path key={y} d={`M642 ${y}h144`} />
      ))}
      <g fill="#000" stroke="none" fontSize="9" fontWeight="700" className="font-[Lato,'Noto_Sans',sans-serif]">
        {[1, 2, 3, 4].map((n) => (
          <g key={n} transform={`translate(0 ${(n - 1) * 17})`}>
            <path d="M653.5 397l7.500 13h-15.500z" fill="none" stroke="#000" />
            <text x="651" y="408">
              {n}
            </text>
            <text x="663" y="406">
              Revision information: {n}
            </text>
          </g>
        ))}
        <text x="647" y="446">Title:</text>
        <text x="647" y="463">Date:</text>
        <text x="647" y="480">Drawn by:</text>
        <text x="647" y="497">Page:</text>
        <text x="647" y="514">Scale:</text>
      </g>
    </g>
  );
}

function Artboard() {
  const callouts = [
    { n: 2, x: 737.5, y: 243 },
    { n: 3, x: 894.5, y: 295 },
    { n: 1, x: 652, y: 570 },
    { n: 4, x: 678.5, y: 675 },
  ];
  const handles = [
    [559.5, 357.5],
    [533.5, 495.5],
    [559.5, 495.5],
    [585.5, 495.5],
    [559.5, 633.5],
  ];

  return (
    <svg
      width="595"
      height="702"
      viewBox="397 89 595 702"
      className="shrink-0 overflow-visible"
      fill="none"
      stroke="#000"
    >
      <path d="M397.5 792V91.5h595V792" fill="#fff" />
      <path d="M472.5 192h212.5v100h-212.5z" stroke="#333" />
      <path d="M685 292h188.5v121.5H685z" stroke="#111" />
      <path d="M707 362l16-8 79 159-16 7z" />
      <path d="M718 258C680 268 622 345 621 411M618 404l2.5 9 4-8" />
      <path d="M873 292C810 290 728 274 716 254M715.5 260v-8l6 5" />
      <path d="M631 563C605 560 555 535 551.5 514M550.5 521v-9l6 6" />
      <path d="M695 661C730 655 788 585 786 523M782 529l4-8 3 8" />
      <ellipse cx="586" cy="634.5" rx="63" ry="44" />
      <ellipse cx="559.5" cy="495.5" rx="26" ry="138" />
      <ellipse cx="559.5" cy="495.5" rx="26" ry="138" stroke="#4f80ff" strokeDasharray="14 4" />
      {handles.map(([x, y]) => (
        <rect key={`${x}-${y}`} x={x - 2} y={y - 2} width="4" height="4" fill="#4f80ff" stroke="#4f80ff" />
      ))}
      <RevisionTable />
      {callouts.map((c) => (
        <g key={c.n}>
          <circle cx={c.x} cy={c.y} r="21.5" />
          <text x={c.x} y={c.y + 3} textAnchor="middle" fill="#000" stroke="none" fontSize="11" fontWeight="600">
            {c.n}
          </text>
        </g>
      ))}
      <path d="M199 336.5h473M197 334l5 5M202 334l-5 5M669 334l5 5M674 334l-5 5" stroke="#3cff3c" />
    </svg>
  );
}

function Dock() {
  return (
    <aside className="w-[38px] shrink-0 border-r border-[#252525]">
      <div className="flex h-3 items-center justify-end bg-linear-to-b from-[#363636] to-[#2c2c2c] pr-1">
        <Collapse />
      </div>
      {DOCK_GROUPS.map((group, i) => (
        <div key={i} className="border-b-2 border-[#252525] pb-px">
          <Grip />
          {group.map((panel) => (
            <button
              key={panel.name}
              aria-label={panel.name}
              className="flex h-7 w-full items-center justify-center"
            >
              <svg width="21" height="20" viewBox="0 0 21 20" aria-hidden="true">
                {panel.art}
              </svg>
            </button>
          ))}
        </div>
      ))}
    </aside>
  );
}

function Workspace() {
  return (
    <main className="flex min-w-0 flex-1 flex-col border-r-2 border-[#252525]">
      <div className="flex h-5 border-b border-[#252525] bg-linear-to-b from-[#363636] to-[#2c2c2c]">
        <div className="flex items-center border-r border-[#252525] bg-[#474747] pr-[6px] pl-2">
          <h1 className="text-[11px] leading-4 font-semibold text-[#e6e6e6]">
            Softpedia* @ 100% (CMYK/Preview)
          </h1>
          <button aria-label="Close document" className="ml-3 p-1">
            <svg width="6" height="6" viewBox="0 0 6 6" aria-hidden="true">
              <path d="M0 0l6 6M6 0L0 6" stroke="#d8d8d8" strokeWidth="1.5" />
            </svg>
          </button>
        </div>
      </div>
      <div className="flex">
        <div className="flex min-w-0 flex-1 justify-center overflow-hidden bg-[#5e5e5e]">
          <Artboard />
        </div>
        <div className="flex w-4 flex-col items-center border-l border-[#252525] bg-[#303030]">
          <button aria-label="Scroll up" className="flex h-5 items-center">
            <Arrow className="rotate-180" />
          </button>
          <span className="grow-[322]" />
          <span className="h-4 w-full bg-[#8f8f8f]" />
          <span className="grow-[328]" />
          <button aria-label="Scroll down" className="flex h-5 items-center">
            <Arrow />
          </button>
        </div>
      </div>
      <div className="flex h-[17px] border-y border-[#252525] text-[10px] leading-[18px] text-[#e2e2e2]">
        <div className="flex flex-[385] justify-end border-r border-[#303030] pr-[76px]">CAD Ellipse</div>
        <button aria-label="Status menu" className="flex w-[17px] items-center justify-center">
          <SideArrow />
        </button>
        <div className="flex flex-[741] items-center border-l border-[#151515] bg-[#303030] px-[6px]">
          <button aria-label="Scroll left">
            <SideArrow left />
          </button>
          <span className="grow-[354]" />
          <span className="h-full w-4 bg-[#8f8f8f]" />
          <span className="grow-[356]" />
          <button aria-label="Scroll right">
            <SideArrow />
          </button>
        </div>
        <span className="w-4" />
      </div>
    </main>
  );
}

export default function App() {
  return (
    <div className="min-h-screen bg-white font-['Noto_Sans','Liberation_Sans',sans-serif]">
      <svg width="0" height="0" className="absolute" aria-hidden="true">
        <defs>
          <linearGradient id="tool-gradient">
            <stop offset="0" stopColor="#2b2b2b" />
            <stop offset="1" stopColor="#b0b0b0" />
          </linearGradient>
        </defs>
      </svg>
      <div className="rounded-t border border-[#1e1e1e] bg-[#474747] px-[3px] pb-[3px]">
        <TitleBar />
        <ControlBar />
        <div className="flex border-t border-[#1e1e1e]">
          <ToolPanel />
          <Workspace />
          <Dock />
        </div>
      </div>
    </div>
  );
}
